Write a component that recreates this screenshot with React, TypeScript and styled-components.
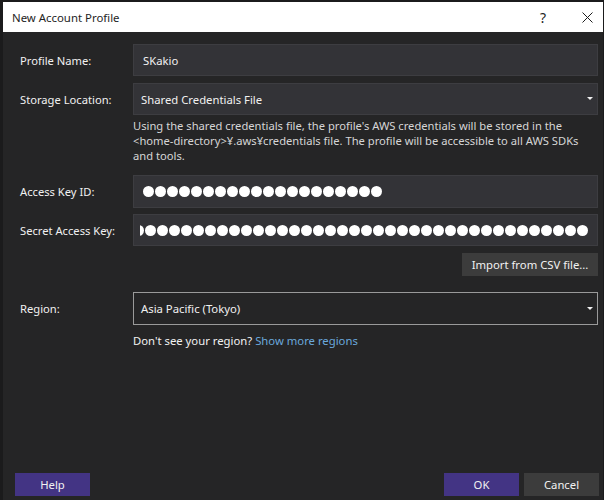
import React from 'react';
import styled, { createGlobalStyle } from 'styled-components';

const GlobalStyle = createGlobalStyle`
  html, body {
    margin: 0;
    padding: 0;
    background: #1b1b1c;
  }
  * { box-sizing: border-box; }
`;

const font = `"Segoe UI", "Noto Sans", "Open Sans", sans-serif`;

// 창 전체
const Screen = styled.div`
  width: 604px;
  height: 500px;
  padding: 2px 1px 0 3px;
  background: #1b1b1c;
  font-family: ${font};
  overflow: hidden;
`;

const Window = styled.div`
  height: 498px;
  display: flex;
  flex-direction: column;
  background: #252526;
`;

const TitleBar = styled.div`
  height: 30px;
  flex: none;
  display: flex;
  align-items: center;
  background: #ffffff;
  color: #1e1e1e;
  font-size: 11.4px;
  padding: 0 0 0 9px;
`;

const Title = styled.span`
  flex: 1;
`;

const TitleButtons = styled.div`
  display: flex;
  gap: 12px;
`;

const TitleButton = styled.div`
  width: 32px;
  height: 30px;
  display: flex;
  align-items: center;
  justify-content: center;
  font-size: 14px;
  color: #1e1e1e;
`;

const Body = styled.div`
  flex: 1;
  display: flex;
  flex-direction: column;
  padding: 12px 2px 2px 17px;
`;

const Form = styled.div`
  display: grid;
  grid-template-columns: 113px 465px;
  align-items: center;
`;

const Label = styled.div<{ mt?: number }>`
  color: #f1f1f1;
  font-size: 11.2px;
  margin-top: ${({ mt }) => mt ?? 0}px;
`;

const Field = styled.div<{ mt?: number; h?: number }>`
  height: ${({ h }) => h ?? 32}px;
  margin-top: ${({ mt }) => mt ?? 0}px;
  display: flex;
  align-items: center;
  background: #333337;
  border: 1px solid #3d3d41;
  color: #f1f1f1;
  font-size: 11.3px;
  padding: 0 9px;
  position: relative;
`;

const SecretField = styled(Field)`
  padding: 0 9px 0 6px;
`;

const Select = styled(Field)<{ outlined?: boolean }>`
  background: ${({ outlined }) => (outlined ? '#252526' : '#333337')};
  border-color: ${({ outlined }) => (outlined ? '#9a9a9a' : '#3d3d41')};
  padding-left: 7px;
`;

const Arrow = styled.div`
  position: absolute;
  right: 4px;
  top: 50%;
  margin-top: -2px;
  width: 0;
  height: 0;
  border-left: 3px solid transparent;
  border-right: 3px solid transparent;
  border-top: 3.5px solid #f1f1f1;
`;

const Note = styled.div`
  grid-column: 2;
  color: #d6d6d6;
  font-size: 11.2px;
  line-height: 15px;
  padding-top: 3px;
`;

const Dots = styled.div<{ end?: boolean }>`
  display: flex;
  gap: 1px;
  overflow: hidden;
  width: 100%;
  justify-content: ${({ end }) => (end ? 'flex-end' : 'flex-start')};
`;

const Dot = styled.span`
  flex: none;
  width: 11px;
  height: 11px;
  border-radius: 50%;
  background: #ffffff;
`;

const ImportRow = styled.div`
  grid-column: 2;
  display: flex;
  justify-content: flex-end;
  margin-top: 7px;
`;

const Button = styled.button<{ primary?: boolean; w?: number }>`
  height: 23px;
  width: ${({ w }) => (w ? `${w}px` : 'auto')};
  padding: 0 8px;
  border: none;
  white-space: nowrap;
  background: ${({ primary }) => (primary ? '#433484' : '#3c3c3c')};
  color: #f1f1f1;
  font-family: ${font};
  font-size: 11.3px;
`;

const Hint = styled.div`
  grid-column: 2;
  margin-top: 8px;
  font-size: 11.3px;
  color: #f1f1f1;
`;

const Link = styled.span`
  color: #6aa8dc;
  margin-left: 3px;
`;

const Footer = styled.div`
  margin-top: auto;
  display: flex;
  align-items: center;
  padding: 0 2px 2px 0;
  margin-left: -5px;
  gap: 5px;
`;

const Spacer = styled.div`
  flex: 1;
`;

function DotRow({ count, end }: { count: number; end?: boolean }) {
  return (
    <Dots end={end}>
      {Array.from({ length: count }).map((_, i) => (
        <Dot key={i} />
      ))}
    </Dots>
  );
}

export default function App() {
  return (
    <>
      <GlobalStyle />
      <Screen>
        <Window>
          <TitleBar>
            <Title>New Account Profile</Title>
            <TitleButtons>
              <TitleButton>?</TitleButton>
              <TitleButton>
                <svg width="11" height="11" viewBox="0 0 11 11">
                  <path d="M0.5 0.5 L10.5 10.5 M10.5 0.5 L0.5 10.5" stroke="#1e1e1e" strokeWidth="1" />
                </svg>
              </TitleButton>
            </TitleButtons>
          </TitleBar>
          <Body>
            <Form>
              <Label>Profile Name:</Label>
              <Field>SKakio</Field>

              <Label mt={7}>Storage Location:</Label>
              <Select mt={7}>
                Shared Credentials File
                <Arrow />
              </Select>

              <Note>
                Using the shared credentials file, the profile's AWS credentials will be stored in the
                <br />
                &lt;home-directory&gt;¥.aws¥credentials file. The profile will be accessible to all AWS SDKs
                <br />
                and tools.
              </Note>

              <Label mt={12}>Access Key ID:</Label>
              <Field mt={12} h={33}>
                <DotRow count={20} />
              </Field>

              <Label mt={6}>Secret Access Key:</Label>
              <SecretField mt={6}>
                <DotRow count={40} end />
              </SecretField>

              <ImportRow>
                <Button w={136}>Import from CSV file...</Button>
              </ImportRow>

              <Label mt={16}>Region:</Label>
              <Select mt={16} h={33} outlined>
                Asia Pacific (Tokyo)
                <Arrow />
              </Select>

              <Hint>
                Don't see your region?<Link>Show more regions</Link>
              </Hint>
            </Form>

            <Footer>
              <Button primary w={75}>Help</Button>
              <Spacer />
              <Button primary w={75}>OK</Button>
              <Button w={75}>Cancel</Button>
            </Footer>
          </Body>
        </Window>
      </Screen>
    </>
  );
}
